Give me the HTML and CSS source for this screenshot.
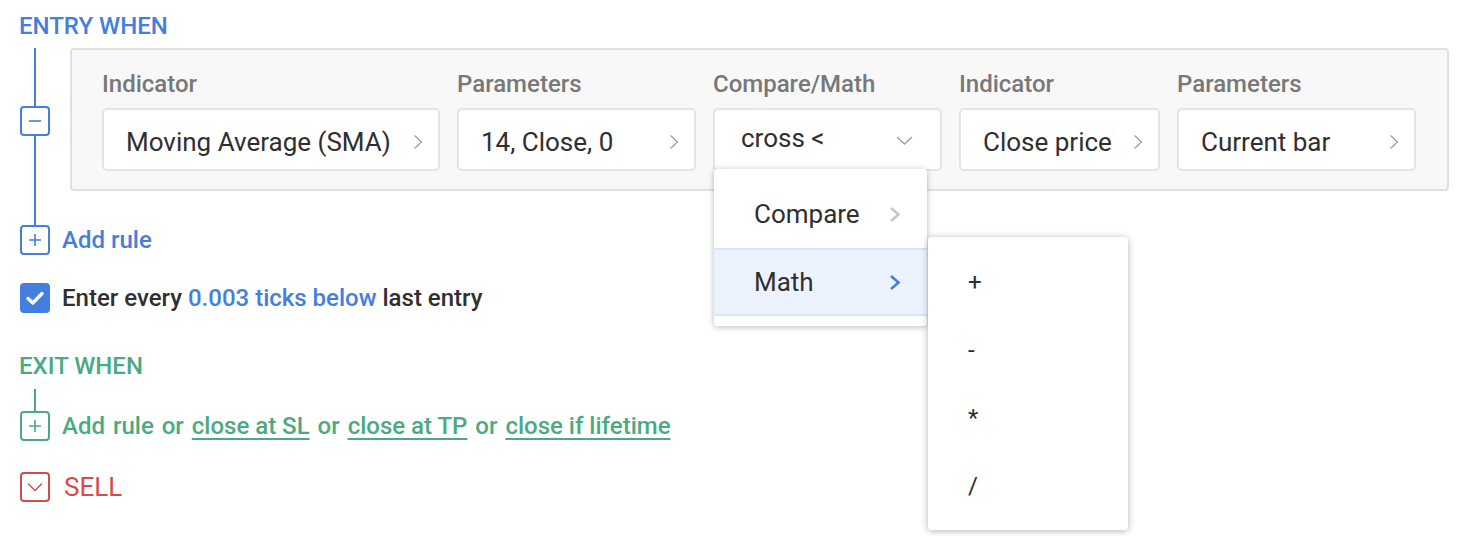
FILE: index.html
```html
<!DOCTYPE html>
<html>
<head>
<meta charset="utf-8">
<link rel="stylesheet" href="styles.css">
</head>
<body>
<div class="page">
  <div class="title title-entry">ENTRY WHEN</div>

  <div class="group">
    <div class="rail rail-blue">
      <span class="seg seg-top"></span>
      <span class="sq sq-blue">
        <svg width="14" height="14" viewBox="0 0 14 14"><path d="M1 7 H13" stroke="currentColor" stroke-width="1.6" fill="none"/></svg>
      </span>
      <span class="seg seg-grow"></span>
    </div>
    <div class="group-body">
      <div class="panel">
        <div class="col">
          <div class="label">Indicator</div>
          <div class="field"><span class="txt">Moving Average (SMA)</span>
            <svg class="chev" width="10" height="16" viewBox="0 0 10 16"><path d="M1.5 1.5 L8.5 8 L1.5 14.5" /></svg></div>
        </div>
        <div class="col">
          <div class="label">Parameters</div>
          <div class="field"><span class="txt">14, Close, 0</span>
            <svg class="chev" width="10" height="16" viewBox="0 0 10 16"><path d="M1.5 1.5 L8.5 8 L1.5 14.5" /></svg></div>
        </div>
        <div class="col col-compare">
          <div class="label">Compare/Math</div>
          <div class="field field-select"><span class="txt">cross &lt;</span>
            <svg class="chev" width="17" height="9" viewBox="0 0 17 9"><path d="M1 1 L8.5 8 L16 1" /></svg></div>
          <div class="menu">
            <div class="menu-item"><span class="txt">Compare</span>
              <svg class="mchev" width="12" height="17" viewBox="0 0 12 17"><path d="M2 2 L9.5 8.5 L2 15" /></svg></div>
            <div class="menu-item menu-item-active"><span class="txt">Math</span>
              <svg class="mchev" width="12" height="17" viewBox="0 0 12 17"><path d="M2 2 L9.5 8.5 L2 15" /></svg></div>
            <div class="submenu">
              <div class="sub-item">+</div>
              <div class="sub-item">-</div>
              <div class="sub-item">*</div>
              <div class="sub-item">/</div>
            </div>
          </div>
        </div>
        <div class="col">
          <div class="label">Indicator</div>
          <div class="field"><span class="txt">Close price</span>
            <svg class="chev" width="10" height="16" viewBox="0 0 10 16"><path d="M1.5 1.5 L8.5 8 L1.5 14.5" /></svg></div>
        </div>
        <div class="col">
          <div class="label">Parameters</div>
          <div class="field"><span class="txt">Current bar</span>
            <svg class="chev" width="10" height="16" viewBox="0 0 10 16"><path d="M1.5 1.5 L8.5 8 L1.5 14.5" /></svg></div>
        </div>
      </div>
    </div>
  </div>

  <div class="row add-row">
    <span class="sq sq-blue">
      <svg width="14" height="14" viewBox="0 0 14 14"><path d="M1 7 H13 M7 1 V13" stroke="currentColor" stroke-width="1.6" fill="none"/></svg>
    </span>
    <span class="rtext blue">Add rule</span>
  </div>

  <div class="row check-row">
    <span class="checkbox">
      <svg width="30" height="30" viewBox="0 0 30 30"><path d="M8 15.5 L12.8 20 L22 10.5" stroke="#fff" stroke-width="3.4" fill="none" stroke-linecap="round" stroke-linejoin="round"/></svg>
    </span>
    <span class="rtext dark">Enter every <span class="blue">0.003 ticks below</span> last entry</span>
  </div>

  <div class="title title-exit">EXIT WHEN</div>
  <div class="exit-line"></div>
  <div class="row exit-row">
    <span class="sq sq-green">
      <svg width="14" height="14" viewBox="0 0 14 14"><path d="M1 7 H13 M7 1 V13" stroke="currentColor" stroke-width="1.6" fill="none"/></svg>
    </span>
    <span class="rtext green exit-text">Add rule or <span class="ul">close at SL</span> or <span class="ul">close at TP</span> or <span class="ul">close if lifetime</span></span>
  </div>

  <div class="row sell-row">
    <span class="sq sq-red">
      <svg width="30" height="30" viewBox="0 0 30 30"><path d="M7 11 L15 19 L23 11" stroke="currentColor" stroke-width="1.6" fill="none"/></svg>
    </span>
    <span class="sell">SELL</span>
  </div>
</div>
</body>
</html>
```

FILE: styles.css
```css
:root {
  --blue: #437ee0;
  --green: #4aab80;
  --red: #d84a4a;
}
html, body {
  margin: 0;
  padding: 0;
  background: #fff;
}
body {
  font-family: Roboto, "Liberation Sans", sans-serif;
  color: #2f2f2f;
}
.page {
  width: 1480px;
  height: 536px;
  box-sizing: border-box;
  padding: 12px 0 0 20px;
  overflow: hidden;
}
.title {
  font-size: 24px;
  font-weight: 500;
  line-height: 28px;
  height: 28px;
  margin-left: -1px;
}
.title-entry { color: var(--blue); }
.title-exit { color: var(--green); margin-top: 39px; }

.group {
  display: flex;
  margin-top: 8px;
}
.rail {
  width: 30px;
  margin-right: 20px;
  display: flex;
  flex-direction: column;
  align-items: center;
}
.rail-blue { color: var(--blue); }
.seg {
  width: 2px;
  background: currentColor;
}
.seg-top { height: 58px; }
.seg-grow { flex: 1; }
.group-body { padding-bottom: 34px; }

.panel {
  width: 1379px;
  box-sizing: border-box;
  border: 2px solid #e0e0e0;
  border-radius: 4px;
  background: #f8f8f8;
  padding: 20px 30px 18px;
  display: grid;
  grid-template-columns: 338px 239px 229px 201px 239px;
  column-gap: 17px;
}
.col { position: relative; }
.label {
  font-size: 24px;
  font-weight: 500;
  color: #787878;
  line-height: 28px;
  margin-bottom: 10px;
  white-space: nowrap;
}
.field {
  height: 63px;
  box-sizing: border-box;
  border: 2px solid #e4e4e4;
  border-radius: 5px;
  background: #fff;
  display: flex;
  align-items: center;
  padding: 4px 15px 0 22px;
  font-size: 26px;
  color: #2f2f2f;
}
.field .txt {
  flex: 1;
  white-space: nowrap;
}
.chev {
  flex: none;
  fill: none;
  stroke: #9e9e9e;
  stroke-width: 1.3;
}
.field-select {
  padding: 0 27px 4px 26px;
}
.field-select .chev { margin-top: 6px; }

.menu {
  position: absolute;
  left: 1px;
  top: calc(100% - 2px);
  width: 213px;
  box-sizing: border-box;
  padding: 11px 0 10px;
  background: #fff;
  border-radius: 3px;
  box-shadow: 0 1px 6px rgba(0, 0, 0, 0.28);
  z-index: 10;
}
.menu-item {
  height: 68px;
  box-sizing: border-box;
  display: flex;
  align-items: center;
  padding: 0 26px 0 40px;
  font-size: 26px;
  color: #2f2f2f;
}
.menu-item .txt { flex: 1; }
.mchev {
  fill: none;
  stroke: #c8c8c8;
  stroke-width: 2.6;
}
.menu-item-active {
  background: #edf3fe;
  border-top: 2px solid #d9e5f8;
  border-bottom: 2px solid #d9e5f8;
}
.menu-item-active .mchev { stroke: var(--blue); }

.submenu {
  position: absolute;
  left: 214px;
  top: 68px;
  width: 200px;
  box-sizing: border-box;
  padding: 11px 0 10px;
  background: #fff;
  border-radius: 3px;
  box-shadow: 0 1px 7px rgba(0, 0, 0, 0.3);
}
.sub-item {
  height: 68px;
  display: flex;
  align-items: center;
  padding-left: 40px;
  font-size: 24px;
  color: #2f2f2f;
}

.row {
  display: flex;
  align-items: center;
}
.sq {
  width: 30px;
  height: 30px;
  box-sizing: border-box;
  border: 2px solid currentColor;
  border-radius: 4px;
  display: flex;
  align-items: center;
  justify-content: center;
  flex: none;
  background: #fff;
}
.sq-blue { color: var(--blue); }
.sq-green { color: var(--green); }
.sq-red { color: var(--red); }
.sq-red svg { display: block; }

.rtext {
  font-size: 24px;
  font-weight: 500;
  line-height: 28px;
  margin-left: 12px;
  white-space: nowrap;
}
.blue { color: var(--blue); }
.green { color: var(--green); }
.dark { color: #2f2f2f; }
.exit-text { word-spacing: 2px; }
.ul {
  word-spacing: 0;
  text-decoration: underline;
  text-decoration-thickness: 2px;
  text-underline-offset: 4px;
}

.add-row { margin-top: 0; }
.check-row { margin-top: 28px; }
.checkbox {
  width: 30px;
  height: 30px;
  border-radius: 4px;
  background: var(--blue);
  flex: none;
}
.checkbox svg { display: block; }

.exit-line {
  width: 2px;
  height: 22px;
  margin: 9px 0 0 14px;
  background: var(--green);
}
.sell-row { margin-top: 31px; }
.sell {
  font-size: 26px;
  line-height: 30px;
  color: var(--red);
  margin-left: 14px;
}
```
